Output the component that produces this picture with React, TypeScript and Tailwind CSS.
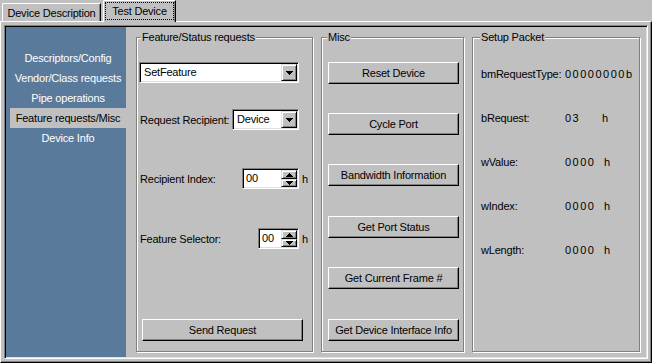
import React from 'react';

const raised =
  'border border-t-white border-l-white border-r-black border-b-black shadow-[inset_-1px_-1px_0_#808080] bg-[#c0c0c0]';
const sunken =
  'border border-t-[#808080] border-l-[#808080] border-r-white border-b-white p-px shadow-[inset_1px_1px_0_#000,inset_-1px_-1px_0_#dfdfdf]';
const arrowBtn =
  'flex items-center justify-center border border-t-[#dfdfdf] border-l-[#dfdfdf] border-r-black border-b-black bg-[#c0c0c0] shadow-[inset_1px_1px_0_#fff,inset_-1px_-1px_0_#808080]';

function DownArrow() {
  return (
    <svg width="7" height="4" viewBox="0 0 7 4" shapeRendering="crispEdges">
      <path d="M0 0h7v1H0z M1 1h5v1H1z M2 2h3v1H2z M3 3h1v1H3z" fill="#000" />
    </svg>
  );
}

function Dropdown({ value, className }: { value: string; className: string }) {
  return (
    <div className={`${sunken} flex h-[21px] bg-white ${className}`}>
      <span className="flex-1 pl-[3px] leading-[17px]">{value}</span>
      <div className={`${arrowBtn} h-[17px] w-[16px]`}>
        <DownArrow />
      </div>
    </div>
  );
}

function Spin({ className }: { className: string }) {
  return (
    <div className={`${sunken} flex h-[21px] bg-white ${className}`}>
      <span className="flex-1 pl-[2px] leading-[16px]">00</span>
      <div className="flex w-[16px] flex-col">
        <div className={`${arrowBtn} h-[9px]`}>
          <svg width="7" height="4" viewBox="0 0 7 4" shapeRendering="crispEdges">
            <path d="M3 0h1v1H3z M2 1h3v1H2z M1 2h5v1H1z M0 3h7v1H0z" fill="#000" />
          </svg>
        </div>
        <div className={`${arrowBtn} h-[8px]`}>
          <DownArrow />
        </div>
      </div>
    </div>
  );
}

function Group({
  title,
  titleLeft,
  className,
  children,
}: {
  title: string;
  titleLeft: string;
  className: string;
  children: React.ReactNode;
}) {
  return (
    <div
      className={`relative h-[315px] border border-[#808080] shadow-[1px_1px_0_#fff,inset_1px_1px_0_#fff] ${className}`}
    >
      <span className={`absolute top-[-8px] bg-[#c0c0c0] px-px leading-[14px] ${titleLeft}`}>{title}</span>
      {children}
    </div>
  );
}

const navItems = [
  'Descriptors/Config',
  'Vendor/Class requests',
  'Pipe operations',
  'Feature requests/Misc',
  'Device Info',
];

const miscButtons = [
  { label: 'Reset Device', mt: '' },
  { label: 'Cycle Port', mt: 'mt-[29px]' },
  { label: 'Bandwidth Information', mt: 'mt-[29px]' },
  { label: 'Get Port Status', mt: 'mt-[30px]' },
  { label: 'Get Current Frame #', mt: 'mt-[29px]' },
  { label: 'Get Device Interface Info', mt: 'mt-[30px]' },
];

const setupRows = [
  { label: 'bmRequestType:', value: '00000000b', unit: '', w: '' },
  { label: 'bRequest:', value: '03', unit: 'h', w: 'w-[37px]' },
  { label: 'wValue:', value: '0000', unit: 'h', w: 'w-[39px]' },
  { label: 'wIndex:', value: '0000', unit: 'h', w: 'w-[39px]' },
  { label: 'wLength:', value: '0000', unit: 'h', w: 'w-[39px]' },
];

export default function App() {
  return (
    <div className="h-[363px] w-[652px] overflow-hidden whitespace-nowrap bg-[#c0c0c0] font-['Liberation_Sans',Arial,sans-serif] text-[11px] leading-[14px] tracking-[-0.2px] text-black">
      {/* tab strip */}
      <div className="flex h-[21px] items-end pl-[2px]">
        <div className="flex h-[18px] w-[99px] items-center justify-center rounded-tl-[2px] border-t border-l border-r border-t-white border-l-white border-r-black shadow-[inset_-1px_0_0_#808080]">
          Device Description
        </div>
        <div className="relative z-10 -mb-px ml-[2px] h-[22px] w-[73px] rounded-tl-[2px] border-t border-l border-r border-t-white border-l-white border-r-black bg-[#c0c0c0] px-px pt-px shadow-[inset_-1px_0_0_#808080]">
          <div className="flex h-[18px] items-center justify-center border border-dotted border-black">
            Test Device
          </div>
        </div>
      </div>

      {/* tab page */}
      <div className="h-[342px] border border-t-white border-l-white border-r-black border-b-black p-[3px] shadow-[inset_-1px_-1px_0_#808080]">
        <div className={`${sunken} flex h-full`}>
          <div className="flex w-[120px] flex-col bg-[#5a7a9c] pt-[21px]">
            {navItems.map((item, i) => (
              <div
                key={item}
                className={`ml-[4px] flex h-[20px] items-center justify-center ${
                  i === 3 ? 'bg-[#c0c0c0] text-black' : 'text-white'
                }`}
              >
                {item}
              </div>
            ))}
          </div>

          <div className="flex flex-1 gap-[8px] pl-[10px] pt-[10px]">
            <Group title="Feature/Status requests" titleLeft="left-[4px]" className="w-[177px]">
              <div className="flex flex-col">
                <Dropdown value="SetFeature" className="ml-[2px] mt-[24px] w-[160px]" />
                <div className="mt-[26px] flex w-[162px] items-center justify-between pl-[3px]">
                  <span>Request Recipient:</span>
                  <Dropdown value="Device" className="w-[67px]" />
                </div>
                <div className="mt-[38px] flex items-center">
                  <div className="flex w-[162px] items-center justify-between pl-[3px]">
                    <span>Recipient Index:</span>
                    <Spin className="w-[57px]" />
                  </div>
                  <span className="ml-[3px]">h</span>
                </div>
                <div className="mt-[39px] flex items-center">
                  <div className="flex w-[162px] items-center justify-between pl-[3px]">
                    <span>Feature Selector:</span>
                    <Spin className="w-[41px]" />
                  </div>
                  <span className="ml-[3px]">h</span>
                </div>
                <button className={`${raised} ml-[5px] mt-[70px] h-[22px] w-[161px]`}>Send Request</button>
              </div>
            </Group>

            <Group title="Misc" titleLeft="left-[5px]" className="w-[143px]">
              <div className="flex flex-col pl-[6px] pt-[24px]">
                {miscButtons.map((b) => (
                  <button key={b.label} className={`${raised} ${b.mt} h-[22px] w-[131px]`}>
                    {b.label}
                  </button>
                ))}
              </div>
            </Group>

            <Group title="Setup Packet" titleLeft="left-[7px]" className="w-[168px]">
              <div className="flex flex-col gap-[30px] pl-[8px] pt-[29px]">
                {setupRows.map((r) => (
                  <div key={r.label} className="flex h-[14px] items-center">
                    <span className="w-[84px] shrink-0">{r.label}</span>
                    <span className={`shrink-0 tracking-[1.5px] ${r.w}`}>{r.value}</span>
                    {r.unit && <span>{r.unit}</span>}
                  </div>
                ))}
              </div>
            </Group>
          </div>
        </div>
      </div>
    </div>
  );
}
